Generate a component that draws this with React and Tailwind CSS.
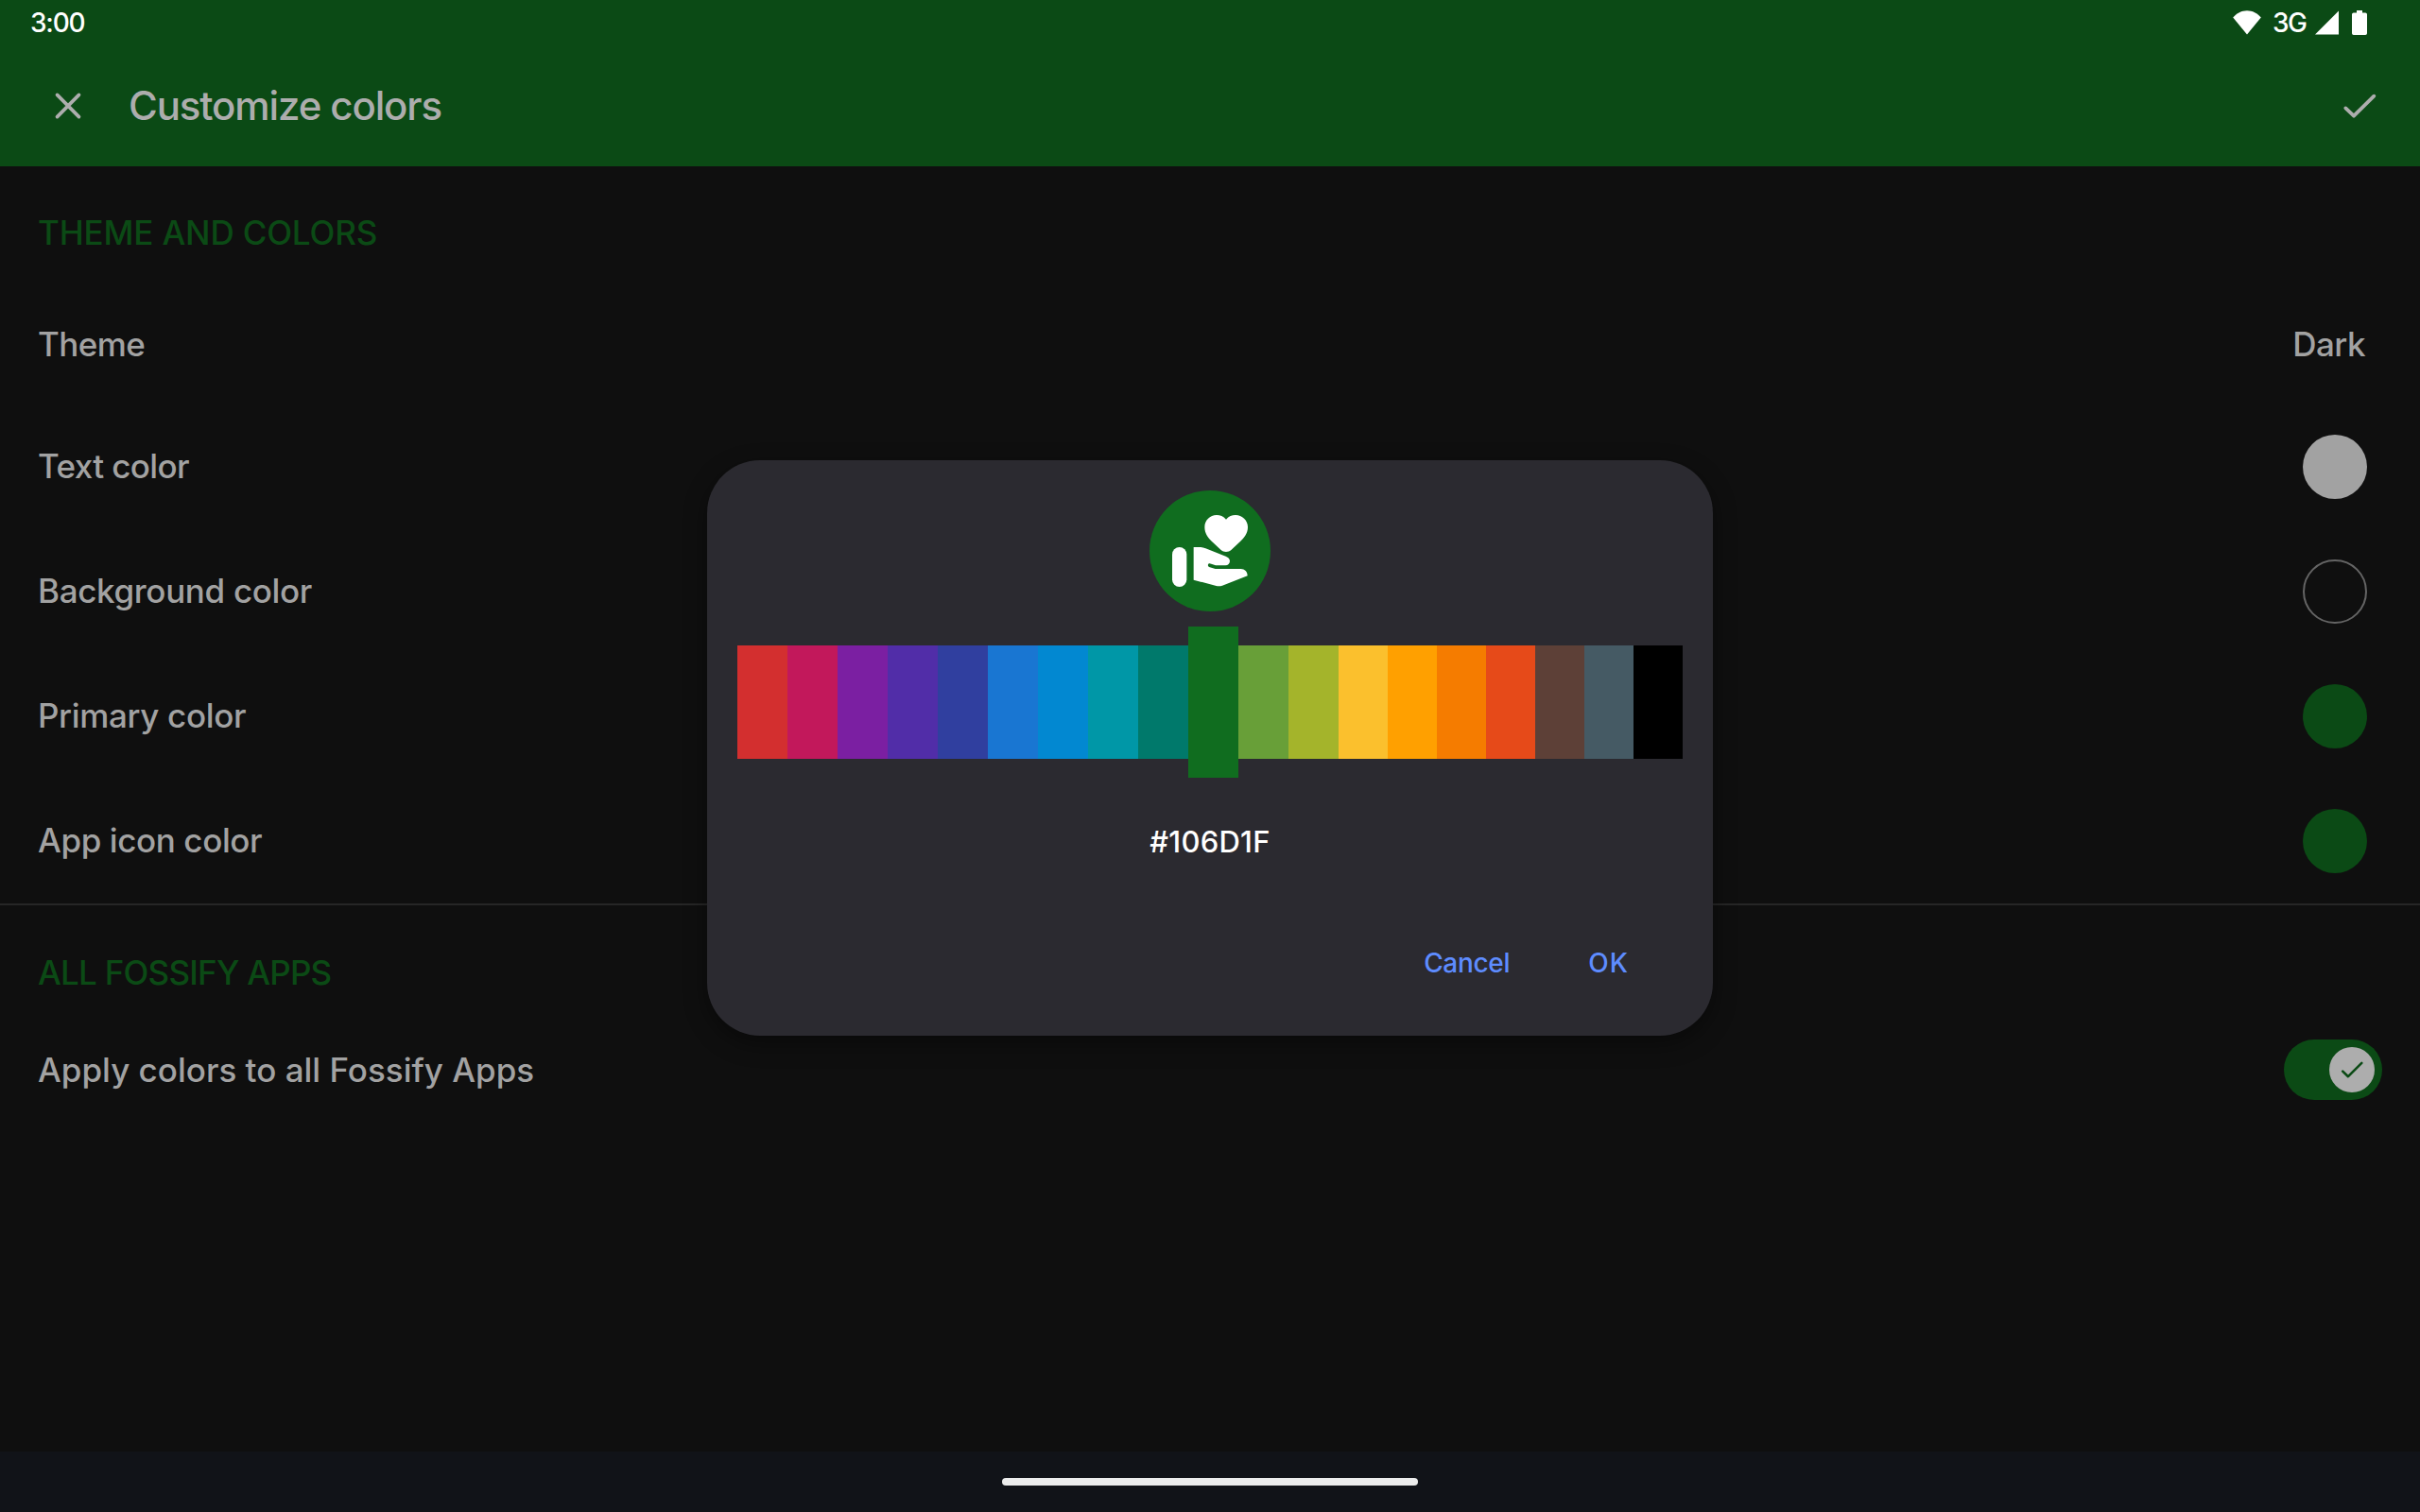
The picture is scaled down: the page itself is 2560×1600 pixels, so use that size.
import React from "react";

const SWATCHES = [
  { color: "#D32F2F", width: 53 },
  { color: "#C2185B", width: 53 },
  { color: "#7B1FA2", width: 53 },
  { color: "#512DA8", width: 53 },
  { color: "#303F9F", width: 53 },
  { color: "#1976D2", width: 53 },
  { color: "#0288D1", width: 53 },
  { color: "#0097A7", width: 53 },
  { color: "#00796B", width: 53 },
  { color: "#106D1F", width: 53, selected: true },
  { color: "#689F38", width: 53 },
  { color: "#A4B42B", width: 53 },
  { color: "#FBC02D", width: 52 },
  { color: "#FFA000", width: 52 },
  { color: "#F57C00", width: 52 },
  { color: "#E64A19", width: 52 },
  { color: "#5D4037", width: 52 },
  { color: "#455A64", width: 52 },
  { color: "#000000", width: 52 },
];

const COLOR_ROWS = [
  { label: "Text color", tracking: "tracking-[-0.62px]", swatch: "bg-[#a2a2a2]" },
  { label: "Background color", tracking: "tracking-[-0.34px]", swatch: "border-2 border-[#646464]" },
  { label: "Primary color", tracking: "tracking-[-0.34px]", swatch: "bg-[#0b4a15]" },
  { label: "App icon color", tracking: "tracking-[-0.4px]", swatch: "bg-[#0b4a15]" },
];

function StatusBar() {
  return (
    <div className="flex h-12 items-center justify-between pl-8 pr-14 text-[28px] leading-none text-white">
      <span className="font-medium tracking-[-1.2px]">3:00</span>
      <div className="flex h-12 items-center">
        <svg className="h-[26px] w-[30px]" viewBox="0 0 30 26" fill="currentColor">
          <path d="M15 25.5 0.2 7.6C4 3.1 9.3 0.3 15 0.3S26 3.1 29.8 7.6Z" />
        </svg>
        <span className="ml-[12px] w-[36px] font-medium tracking-[-1.5px]">3G</span>
        <svg className="ml-[9px] h-[26px] w-[26px]" viewBox="0 0 26 26" fill="currentColor">
          <path d="M0 25.4 25 0.4V25.4Z" />
        </svg>
        <svg className="ml-[13px] h-[26px] w-[16px]" viewBox="0 0 16 26" fill="currentColor">
          <path d="M5 0H11V2.4H14.2Q16 2.4 16 4.2V24.2Q16 26 14.2 26H1.8Q0 26 0 24.2V4.2Q0 2.4 1.8 2.4H5Z" />
        </svg>
      </div>
    </div>
  );
}

function Toolbar() {
  return (
    <div className="flex h-32 items-center pl-12 pr-10 text-[#adadad]">
      <svg className="size-12" viewBox="0 0 48 48" fill="none" stroke="currentColor" strokeWidth="3.7" strokeLinecap="round">
        <path d="M12.5 12.4 35.5 35.6M35.5 12.4 12.5 35.6" />
      </svg>
      <h1 className="ml-[40px] text-[42px] font-medium leading-none tracking-[-1.12px]">Customize colors</h1>
      <svg className="ml-auto size-12" viewBox="0 0 48 48" fill="none" stroke="currentColor" strokeWidth="3.8" strokeLinecap="round" strokeLinejoin="round">
        <path d="M9.3 26.4 18 34.7 39.3 13.7" />
      </svg>
    </div>
  );
}

function DonateIcon() {
  return (
    <svg className="size-32" viewBox="108 117 384 384">
      <circle cx="300" cy="309" r="192" fill="#106D1F" />
      <g fill="#fff">
        <rect x="180" y="297" width="46" height="126" rx="23" />
        <path d="M248 297H264C273 297 279 298 286 301L350 326C358 329 363 334 363 341C363 349 357 355 349 355H318L304 350C301 349 298 347 295 350C292 354 294 358 297 360L317 366H398C410 366 419 375 419 388L339 419C332 421.500 326 421.500 320 420L248 401Z" />
        <path d="M351 209C343 199 332 195 321 195C300 195 283 212 283 233C283 253 294 267 306 279L334 305C344 314 358 314 368 305L396 279C408 267 420 253 420 233C420 212 402 195 381 195C370 195 359 199 351 209Z" />
      </g>
    </svg>
  );
}

function ColorDialog() {
  return (
    <div className="absolute inset-0 flex items-start justify-center pt-[487px]">
      <div className="flex h-[609px] w-[1064px] flex-col items-center rounded-[56px] bg-[#2b2a30] px-8 pt-8 shadow-[0_8px_24px_rgba(0,0,0,0.4)]">
        <DonateIcon />
        <div className="mt-4 flex h-40 w-full items-center">
          {SWATCHES.map((s) => (
            <div
              key={s.color}
              className={s.selected ? "h-full shrink-0" : "h-[120px] shrink-0"}
              style={{ width: s.width, backgroundColor: s.color }}
            />
          ))}
        </div>
        <div className="mt-[35px] flex h-16 items-center text-[31px] font-medium leading-none tracking-[0.25px] text-white">
          #106D1F
        </div>
        <div className="mt-[49px] flex h-24 w-full items-center justify-end gap-[83px] pr-[57px] text-[28px] font-medium leading-none text-[#5e8cff]">
          <button className="tracking-[-0.3px]">Cancel</button>
          <button className="tracking-[1px]">OK</button>
        </div>
      </div>
    </div>
  );
}

export default function App() {
  return (
    <div className="relative flex h-[1600px] w-[2560px] flex-col overflow-hidden bg-[#0f0f0f] font-['Inter',sans-serif] text-[35px] leading-none text-[#a2a2a2]">
      <header className="h-44 bg-[#0b4a15]">
        <StatusBar />
        <Toolbar />
      </header>

      <main className="flex-1">
        <h2 className="flex h-[124px] items-center pb-4 pt-8 pl-10 font-[450] text-[#0b4a15] tracking-[-0.16px]">
          THEME AND COLORS
        </h2>
        <div className="flex h-32 items-center justify-between pl-10 pr-[58px] font-medium">
          <span className="tracking-[-0.6px]">Theme</span>
          <span className="tracking-[-0.5px]">Dark</span>
        </div>
        {COLOR_ROWS.map((row) => (
          <div key={row.label} className="flex h-[132px] items-center justify-between pl-10 pr-14 font-medium">
            <span className={`pb-px ${row.tracking}`}>{row.label}</span>
            <span className={`size-[68px] rounded-full ${row.swatch}`} />
          </div>
        ))}
        <div className="h-0.5 bg-[#262626]" />
        <h2 className="flex h-[142px] items-center pl-10 font-[450] text-[#0b4a15] tracking-[-0.76px]">ALL FOSSIFY APPS</h2>
        <div className="flex h-16 items-center justify-between pl-10 pr-10 font-medium">
          <span>Apply colors to all Fossify Apps</span>
          <div className="flex h-16 w-[104px] items-center justify-end rounded-full bg-[#0b4a15] pr-2">
            <div className="flex size-12 items-center justify-center rounded-full bg-[#adadad]">
              <svg className="size-12" viewBox="0 0 48 48" fill="none" stroke="#0b4a15" strokeWidth="2.6" strokeLinecap="round" strokeLinejoin="round">
                <path d="M14.200 25.600 20 31.200 34.300 16.900" />
              </svg>
            </div>
          </div>
        </div>
      </main>

      <footer className="flex h-16 items-center justify-center bg-[#111318]">
        <div className="h-2 w-[440px] rounded-full bg-[#ececec]" />
      </footer>

      <ColorDialog />
    </div>
  );
}
